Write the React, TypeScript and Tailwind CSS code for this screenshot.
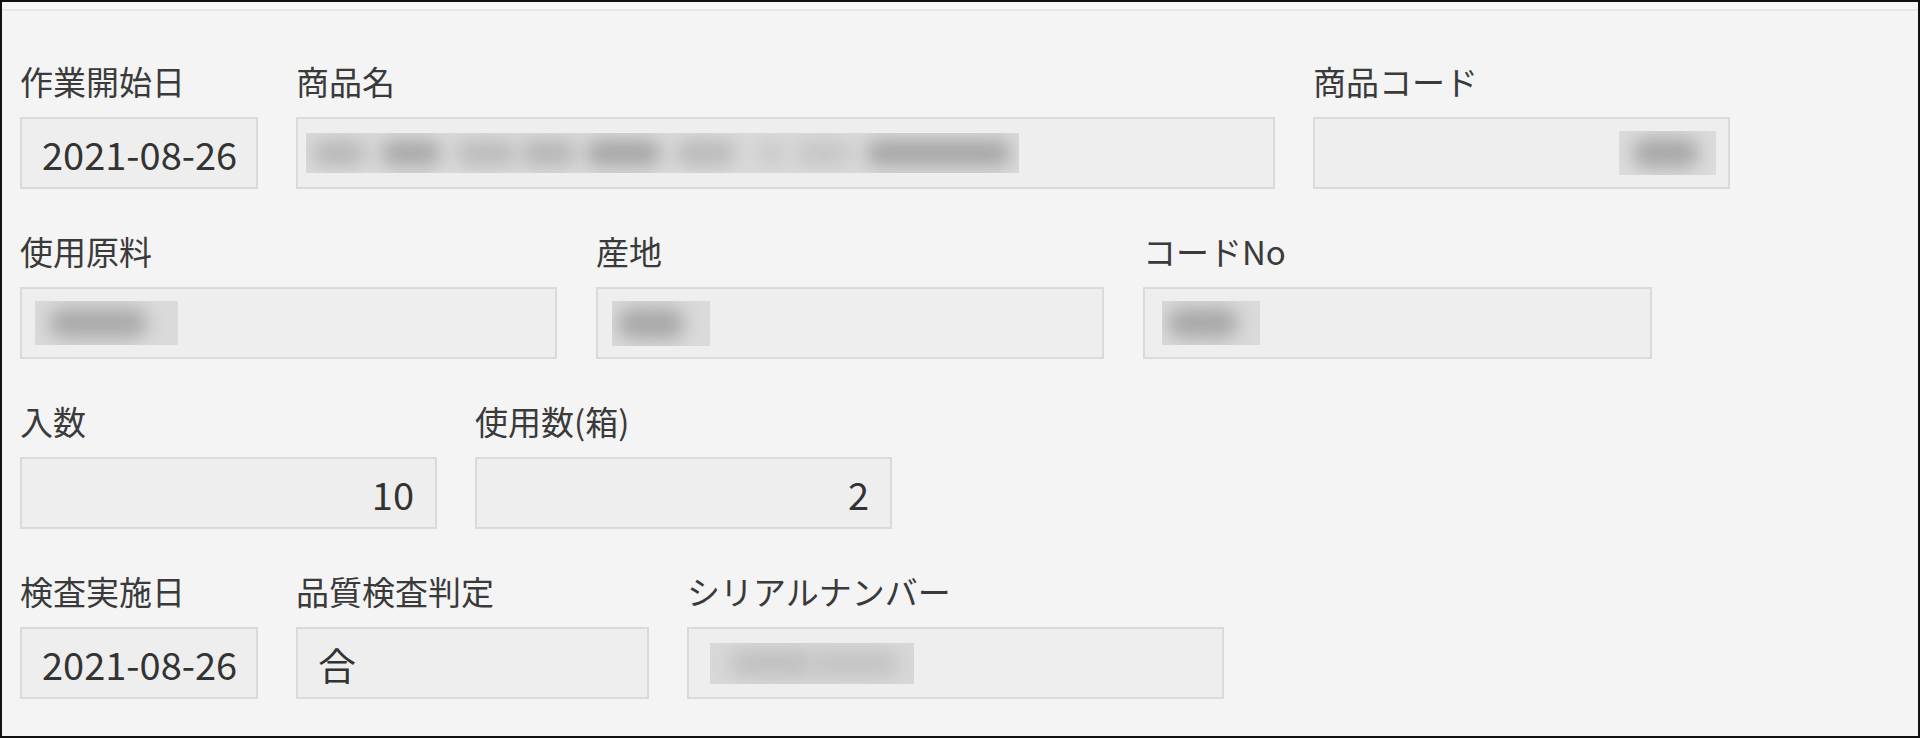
import React from "react";

type Blob = { l: number; w: number; c: string };

function Redacted({ w, h, blobs, bg = "#d6d6d6" }: { w: number; h: number; blobs: Blob[]; bg?: string }) {
  return (
    <div className="relative overflow-hidden" style={{ width: w, height: h, background: bg }}>
      {blobs.map((b, i) => (
        <div
          key={i}
          className="absolute top-[7px] bottom-[7px] rounded-[14px] blur-[9px]"
          style={{ left: b.l, width: b.w, background: b.c }}
        />
      ))}
    </div>
  );
}

function Field({
  label,
  width,
  children,
  align = "left",
  pad = "pl-[22px]",
}: {
  label: string;
  width: string;
  children?: React.ReactNode;
  align?: "left" | "right";
  pad?: string;
}) {
  return (
    <div className={`flex flex-col ${width}`}>
      <div className="h-[44px] leading-[44px] text-[33px] text-[#3a3a3a] whitespace-nowrap">{label}</div>
      <div
        className={`mt-[14px] h-[72px] border-2 border-[#dadada] bg-[#eeeeee] flex items-center ${
          align === "right" ? "justify-end" : "justify-start"
        } ${pad} text-[38px] text-[#333333]`}
      >
        {children}
      </div>
    </div>
  );
}

export default function App() {
  return (
    <div className="w-[1920px] h-[738px] border-2 border-[#111111] bg-[#f4f4f4] font-['Noto_Sans_CJK_JP','Noto_Sans',sans-serif] flex flex-col overflow-hidden">
      <div className="h-[9px] shrink-0 bg-[#f8f8f8] border-b-2 border-[#e5e8e8]" />
      <div className="pt-[48px] px-[18px] flex flex-col gap-[40px]">
        <div className="flex gap-[38px]">
          <Field label="作業開始日" width="w-[238px]" pad="pl-[20px]">2021-08-26</Field>
          <Field label="商品名" width="w-[979px]" pad="pl-[8px]">
            <Redacted
              w={713}
              h={40}
              bg="#dadada"
              blobs={[
                { l: 6, w: 54, c: "#b8b8b8" },
                { l: 75, w: 60, c: "#a8a8a8" },
                { l: 150, w: 60, c: "#bcbcbc" },
                { l: 215, w: 55, c: "#b6b6b6" },
                { l: 280, w: 75, c: "#a6a6a6" },
                { l: 370, w: 60, c: "#bababa" },
                { l: 450, w: 30, c: "#cacaca" },
                { l: 490, w: 55, c: "#c6c6c6" },
                { l: 560, w: 145, c: "#a6a6a6" },
              ]}
            />
          </Field>
          <Field label="商品コード" width="w-[417px]" align="right" pad="pr-[12px]">
            <Redacted w={97} h={44} bg="#dcdcdc" blobs={[{ l: 14, w: 66, c: "#a8a8a8" }]} />
          </Field>
        </div>
        <div className="flex gap-[39px]">
          <Field label="使用原料" width="w-[537px]" pad="pl-[13px]">
            <Redacted w={143} h={44} bg="#dadada" blobs={[{ l: 14, w: 98, c: "#aaaaaa" }]} />
          </Field>
          <Field label="産地" width="w-[508px]" pad="pl-[14px]">
            <Redacted w={98} h={45} bg="#dadada" blobs={[{ l: 6, w: 66, c: "#a8a8a8" }]} />
          </Field>
          <Field label="コードNo" width="w-[509px]" pad="pl-[17px]">
            <Redacted w={98} h={44} bg="#dadada" blobs={[{ l: 6, w: 70, c: "#a8a8a8" }]} />
          </Field>
        </div>
        <div className="flex gap-[38px]">
          <Field label="入数" width="w-[417px]" align="right" pad="pr-[21px]">
            10
          </Field>
          <Field label="使用数(箱)" width="w-[417px]" align="right" pad="pr-[21px]">
            2
          </Field>
        </div>
        <div className="flex gap-[38px]">
          <Field label="検査実施日" width="w-[238px]" pad="pl-[20px]">2021-08-26</Field>
          <Field label="品質検査判定" width="w-[353px]" pad="pl-[20px]">
            合
          </Field>
          <Field label="シリアルナンバー" width="w-[537px]" pad="pl-[21px]">
            <Redacted
              w={204}
              h={41}
              bg="#d8d8d8"
              blobs={[
                { l: 20, w: 85, c: "#c0c0c0" },
                { l: 100, w: 90, c: "#c4c4c4" },
              ]}
            />
          </Field>
        </div>
      </div>
    </div>
  );
}
